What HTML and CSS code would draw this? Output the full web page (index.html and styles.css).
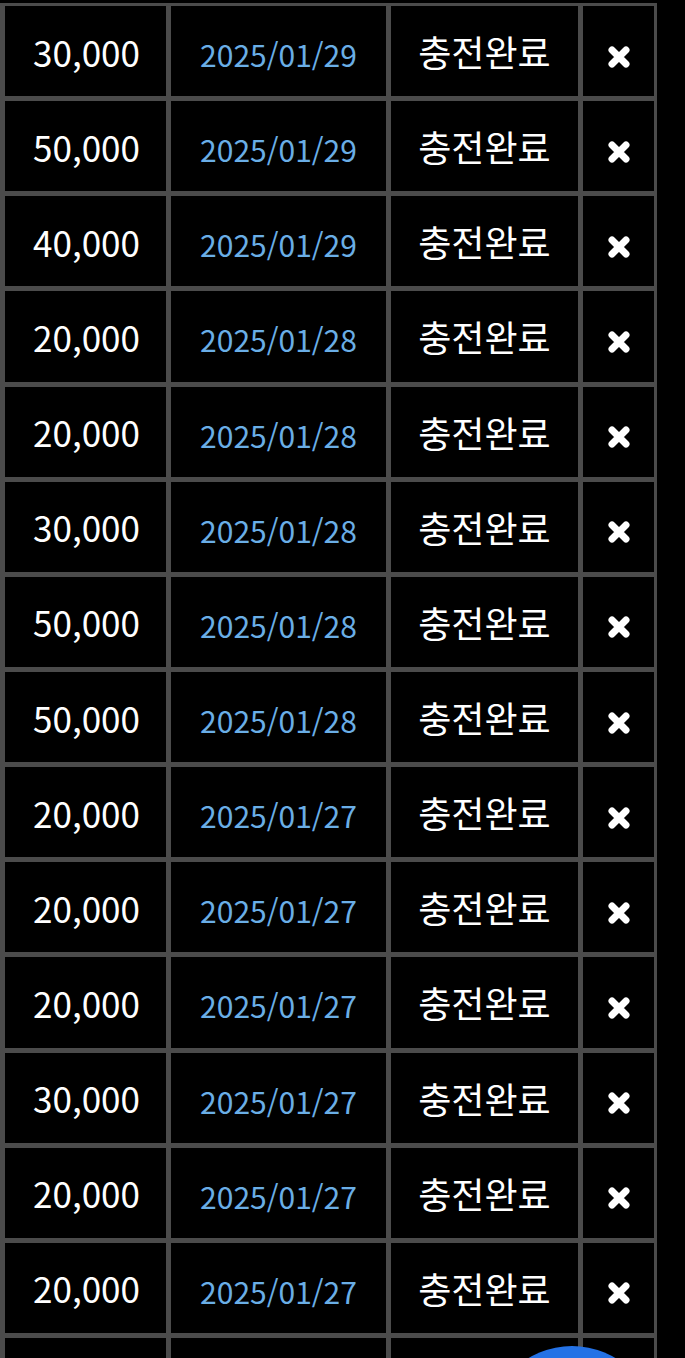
FILE: index.html
```html
<!DOCTYPE html>
<html lang="ko">
<head>
    <meta charset="UTF-8">
    <meta name="viewport" content="width=device-width, initial-scale=1.0">
    <title>충전내역</title>
    <link rel="stylesheet" href="styles.css">
</head>
<body>
    <div class="charge-list" id="chargeList">
        <!-- rows are filled by JavaScript -->
    </div>

    <button class="fab" aria-label="menu"></button>

    <script>
        const history = [
            ['30,000', '2025/01/29'],
            ['50,000', '2025/01/29'],
            ['40,000', '2025/01/29'],
            ['20,000', '2025/01/28'],
            ['20,000', '2025/01/28'],
            ['30,000', '2025/01/28'],
            ['50,000', '2025/01/28'],
            ['50,000', '2025/01/28'],
            ['20,000', '2025/01/27'],
            ['20,000', '2025/01/27'],
            ['20,000', '2025/01/27'],
            ['30,000', '2025/01/27'],
            ['20,000', '2025/01/27'],
            ['20,000', '2025/01/27']
        ];

        const closeIcon = `
            <svg class="del-icon" width="26" height="26" viewBox="0 0 26 26">
                <path d="M6 6 L20 20 M20 6 L6 20" stroke="#fff" stroke-width="7" stroke-linecap="round"/>
            </svg>`;

        let rows = history.map(row => `
            <div class="cell amount">${row[0]}</div>
            <div class="cell date">${row[1]}</div>
            <div class="cell status">충전완료</div>
            <div class="cell del">${closeIcon}</div>
        `).join('');

        // next row is still below the fold
        rows += '<div class="cell"></div>'.repeat(4);

        document.getElementById('chargeList').innerHTML = rows;
    </script>
</body>
</html>
```

FILE: styles.css
```css
body {
    font-family: 'Noto Sans CJK KR', 'Noto Sans', sans-serif;
    background: #000;
    color: #fff;
    margin: 0;
    padding-top: 3px;
    overflow: hidden;
}
.charge-list {
    display: grid;
    grid-template-columns: 161px 215px 187px 71px;
    grid-auto-rows: 90.15px;
    gap: 5px;
    width: max-content;
    padding: 3px 3px 0 5px;
    background: #4b4b4b;
}
.cell {
    background: #000;
    display: flex;
    align-items: center;
    justify-content: center;
}
.amount {
    font-size: 35px;
    padding-left: 2px;
}
.date {
    font-size: 30px;
    color: #6aaee6;
    padding-top: 6px;
}
.status {
    font-size: 36px;
}
.del {
    padding-top: 11px;
}
.del-icon {
    display: block;
}
.fab {
    position: fixed;
    left: 487px;
    top: 1346px;
    width: 170px;
    height: 170px;
    border: none;
    border-radius: 50%;
    background: #2472e6;
}
```
